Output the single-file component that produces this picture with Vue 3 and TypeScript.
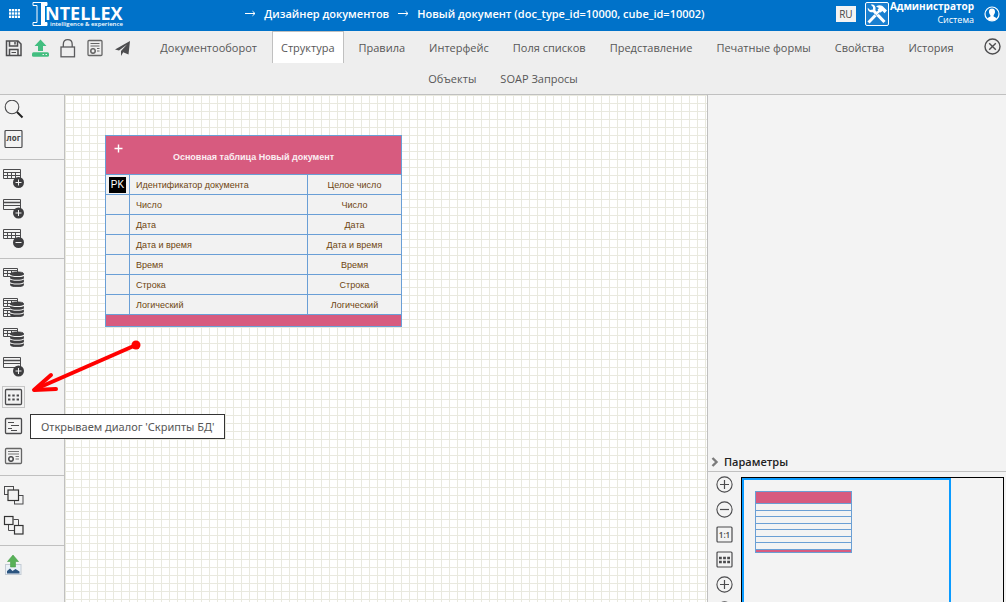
<script setup lang="ts">
import { ref } from 'vue'

interface Field {
  name: string
  type: string
  key?: boolean
}

interface Tool {
  id: string
  label: string
}

const crumbs = ['Дизайнер документов', 'Новый документ (doc_type_id=10000, cube_id=10002)']

const tabs = [
  'Документооборот',
  'Структура',
  'Правила',
  'Интерфейс',
  'Поля списков',
  'Представление',
  'Печатные формы',
  'Свойства',
  'История',
  'Объекты',
  'SOAP Запросы',
]
const activeTab = ref('Структура')

const toolGroups: { name: string; tools: Tool[] }[] = [
  { name: 'view', tools: [{ id: 'search', label: 'Поиск' }, { id: 'log', label: 'Лог' }] },
  {
    name: 'table',
    tools: [
      { id: 'table-plus', label: 'Добавить таблицу' },
      { id: 'rows-plus', label: 'Добавить поле' },
      { id: 'table-minus', label: 'Удалить таблицу' },
    ],
  },
  {
    name: 'database',
    tools: [
      { id: 'db', label: 'Таблица БД' },
      { id: 'db-pair', label: 'Таблицы БД' },
      { id: 'db-sync', label: 'Обновить БД' },
      { id: 'rows-add', label: 'Добавить строку' },
      { id: 'scripts', label: 'Скрипты БД' },
      { id: 'list', label: 'Список' },
      { id: 'report', label: 'Отчёт' },
    ],
  },
  {
    name: 'arrange',
    tools: [{ id: 'front', label: 'На передний план' }, { id: 'back', label: 'На задний план' }],
  },
  { name: 'export', tools: [{ id: 'image', label: 'Выгрузить изображение' }] },
]

const fields: Field[] = [
  { name: 'Идентификатор документа', type: 'Целое число', key: true },
  { name: 'Число', type: 'Число' },
  { name: 'Дата', type: 'Дата' },
  { name: 'Дата и время', type: 'Дата и время' },
  { name: 'Время', type: 'Время' },
  { name: 'Строка', type: 'Строка' },
  { name: 'Логический', type: 'Логический' },
]

const miniLines = [12, 19, 25, 32, 38, 45, 51, 58]
const zoomTools = [
  { id: 'plus', label: 'Увеличить' },
  { id: 'minus', label: 'Уменьшить' },
  { id: 'one', label: 'Масштаб 1:1' },
  { id: 'grid', label: 'Сетка' },
  { id: 'plus', label: 'Расширить' },
  { id: 'minus', label: 'Сузить' },
]
</script>

<template>
  <div class="app">
    <header class="topbar">
      <button class="apps" aria-label="Меню">
        <svg width="11" height="9" viewBox="0 0 11 9" fill="#fff">
          <template v-for="r in 3" :key="r">
            <rect v-for="c in 4" :key="c" :x="(c - 1) * 3" :y="(r - 1) * 3.3" width="2.3" height="2.4" />
          </template>
        </svg>
      </button>
      <a href="#" class="logo" aria-label="Intellex">
        <svg width="94" height="26" viewBox="0 0 94 26">
          <path d="M1 1.500H15V4.500H12.500V21.500H15V24.500H1V21.500H5V4.500H1Z" fill="none" stroke="#fff" />
          <path d="M9 1.500H15V4.500H12.500V21.500H15V24.500H9Z" fill="#fff" />
          <text x="13" y="19" class="logo-name">NTELLEX</text>
          <text x="18" y="25" class="logo-sub">intelligence &amp; experience</text>
        </svg>
      </a>
      <nav class="crumbs">
        <span v-for="c in crumbs" :key="c" class="crumb">
          <svg width="11" height="7" viewBox="0 0 11 7" fill="none" stroke="#fff">
            <path d="M0 3.500H10M7.500 1.200L10 3.500L7.500 5.800" />
          </svg>
          <a href="#">{{ c }}</a>
        </span>
      </nav>
      <div class="account">
        <button class="lang">RU</button>
        <button class="service" aria-label="Настройки">
          <svg width="24" height="24" viewBox="0 0 24 24">
            <rect x="0.500" y="0.500" width="23" height="23" rx="1.500" fill="#1a7fd0" stroke="#fff" />
            <path d="M8 8L19.500 20" stroke="#fff" stroke-width="3.200" />
            <path d="M2.800 5.800L5 8L8 7.500L8 5L5.800 2.800C8.500 2 11 4 10.500 7.500L8.500 10C5.500 11 2.200 9 2.800 5.800Z" fill="#fff" />
            <path d="M3.500 20.500L15 8.500" stroke="#fff" stroke-width="3" />
            <path d="M11 4.500C14 2.300 17 3 19 5.500L22 8.500L19.500 11.200L17.500 9L15.500 10.500L12.500 7.500L14 6Z" fill="#fff" />
            <path d="M12.500 12.500L15 10.500M9.500 12L11.500 14" stroke="#1a7fd0" stroke-width="0.800" />
          </svg>
        </button>
        <div class="who">
          <strong>Администратор</strong>
          <span>Система</span>
        </div>
        <button class="user" aria-label="Профиль">
          <svg width="16" height="16" viewBox="0 0 16 16">
            <circle cx="8" cy="8" r="7" fill="none" stroke="#fff" stroke-width="1.200" />
            <path d="M8 2.500C10.300 2.500 11.200 4.200 11 6.200C10.800 7.800 10 8.500 9.600 9.300V10.500L13 12.200C11.500 14.200 10 14.800 8 14.800C6 14.800 4.500 14.200 3 12.200L6.400 10.500V9.300C6 8.500 5.200 7.800 5 6.200C4.800 4.200 5.700 2.500 8 2.500Z" fill="#fff" />
          </svg>
        </button>
      </div>
    </header>

    <div class="ribbon">
      <div class="actions">
        <button aria-label="Сохранить">
          <svg width="19" height="19" viewBox="0 0 19 19" fill="none" stroke="#4d4d4f" stroke-width="1.500">
            <path d="M2.500 2H14L17 5V16.500H2.500Z" />
            <path d="M5.500 2V7H13.500V2M11 3V5.500" />
            <path d="M5.500 16.500V10.500H14V16.500" />
            <path d="M7.500 13.500H12" stroke-width="1" />
          </svg>
        </button>
        <button aria-label="Загрузить">
          <svg width="19" height="19" viewBox="0 0 19 19" fill="#43be80">
            <path d="M9.500 0.500L15.500 7H12V12H7V7H3.500Z" />
            <rect x="1" y="13.300" width="17" height="4.400" rx="1.500" />
            <path d="M11.500 15.500H13M14.500 15.500H16" stroke="#eee" />
          </svg>
        </button>
        <button aria-label="Заблокировать">
          <svg width="19" height="19" viewBox="-1 0 19 19" fill="none" stroke="#5a5a5c" stroke-width="1.300">
            <rect x="2" y="8" width="13.500" height="9.800" />
            <path d="M4.300 8V5.500C4.300 2 6 0.700 8.700 0.700S13.200 2 13.200 5.500V8" />
          </svg>
        </button>
        <button aria-label="Отчёт">
          <svg width="19" height="19" viewBox="-1 0 19 19" fill="none" stroke="#666">
            <rect x="2" y="1.500" width="14" height="15" rx="1" stroke-width="1.300" />
            <path d="M4.500 4.500H13.500M4.500 7H13.500M11 9.500H13.500M11 12H13.500" />
            <circle cx="7" cy="12" r="2.200" stroke-width="1.500" />
            <path d="M4 12H5M9 12H10M7 9V10M7 14V15" />
          </svg>
        </button>
        <button aria-label="Отправить">
          <svg width="19" height="19" viewBox="-1 0 19 19" fill="#4d4d4f">
            <path d="M17 2L2 10.500L6 11.500L14 5.500L8 12V17L10.200 13.300L15.500 15.500Z" />
          </svg>
        </button>
      </div>
      <button class="close" aria-label="Закрыть">
        <svg width="17" height="17" viewBox="0 0 17 17" fill="none" stroke="#4d4d4f" stroke-width="1.400">
          <circle cx="8.500" cy="8.500" r="7.500" />
          <path d="M5.200 5.200L11.800 11.800M11.800 5.200L5.200 11.800" />
        </svg>
      </button>
      <nav class="tabs">
        <button
          v-for="t in tabs"
          :key="t"
          class="tab"
          :class="{ 'tab--active': t === activeTab }"
          @click="activeTab = t"
        >{{ t }}</button>
      </nav>
    </div>

    <main class="workspace">
      <aside class="toolbox">
        <div v-for="g in toolGroups" :key="g.name" class="group" :class="'group--' + g.name">
          <button
            v-for="t in g.tools"
            :key="t.id"
            class="tool"
            :class="{ 'tool--hover': t.id === 'scripts' }"
            :aria-label="t.label"
          >
            <svg width="21" height="20" viewBox="0 0 21 20" fill="none" stroke="#4b4b4d">
              <template v-if="t.id === 'search'">
                <circle cx="9" cy="7" r="6.800" stroke-width="1.100" />
                <path d="M14 12L19.500 17.500" stroke="#222" stroke-width="2" />
              </template>
              <template v-else-if="t.id === 'log'">
                <rect x="2" y="0.500" width="17" height="17" rx="1" stroke-width="1.200" />
                <text x="10.500" y="11" class="log-text">лог</text>
              </template>
              <template v-else-if="t.id === 'table-plus' || t.id === 'table-minus'">
                <path d="M0.500 0.500H17.500V9.500H0.500ZM0.500 3.500H17.500M0.500 6.500H17.500M4.500 3.500V9.500M8.500 3.500V9.500M12.500 3.500V9.500" />
                <circle cx="15.500" cy="13.500" r="5.500" fill="#3e3e40" stroke="none" />
                <path :d="t.id === 'table-plus' ? 'M12.500 13.500H18.500M15.500 10.500V16.500' : 'M12.500 13.500H18.500'" stroke="#f3f3f3" />
              </template>
              <template v-else-if="t.id === 'rows-plus' || t.id === 'rows-add'">
                <path d="M0.500 0.500H17.500V10.500H0.500ZM0.500 6.500H17.500" />
                <path d="M0.500 3.500H17.500" stroke-width="1.500" />
                <circle cx="15.500" cy="14" r="5.500" fill="#3e3e40" stroke="none" />
                <path d="M12.500 14H18.500M15.500 11V17" stroke="#f3f3f3" />
              </template>
              <template v-else-if="t.id === 'db' || t.id === 'db-sync' || t.id === 'db-pair'">
                <path d="M0.500 1.500H14.500V9.500H0.500ZM0.500 3.500H14.500M0.500 6.500H14.500M4.500 3.500V9.500M8.500 3.500V9.500" />
                <path v-if="t.id === 'db-pair'" d="M0.500 11.500H12V19.500H0.500ZM0.500 13.500H12M0.500 16.500H12M4.500 13.500V19.500" />
                <path
                  d="M7.500 6.500C7.500 4.400 20.500 4.400 20.500 6.500V18C20.500 20.400 7.500 20.400 7.500 18Z"
                  fill="#3e3e40" stroke="#3e3e40" stroke-width="0.800"
                />
                <path
                  d="M7 8.200C9 10 19 10 21 8.200M7 11.900C9 13.700 19 13.700 21 11.900M7 15.600C9 17.400 19 17.400 21 15.600"
                  stroke="#f3f3f3" stroke-width="1.100"
                />
              </template>
              <template v-else-if="t.id === 'scripts'">
                <rect x="2.500" y="2.500" width="16" height="15" rx="1" stroke-width="1.300" />
                <path d="M5 8.500H16M5 12.500H16" stroke-width="2.200" stroke-dasharray="2.400 1.900" />
              </template>
              <template v-else-if="t.id === 'list'">
                <rect x="2.500" y="1.500" width="16" height="15" rx="1" stroke-width="1.300" />
                <path d="M5 5.500H11M8 8.500H16M5 11.500H9M8 13.500H14" stroke-width="1.200" />
              </template>
              <template v-else-if="t.id === 'report'">
                <rect x="2.500" y="1.500" width="16" height="15" rx="1" stroke="#666" stroke-width="1.300" />
                <path d="M5 4.500H16M5 7H16M12.500 9.500H16M12.500 12H16" stroke="#777" />
                <circle cx="8" cy="12" r="2.200" stroke-width="1.500" />
                <path d="M5 12H6M10 12H11M8 9V10M8 14V15" />
              </template>
              <template v-else-if="t.id === 'front'">
                <rect x="1.500" y="1.500" width="9" height="8" />
                <rect x="11.500" y="10.500" width="8.500" height="8.500" />
                <rect x="5" y="5" width="10.500" height="10.500" fill="#f3f3f3" stroke="#333" stroke-width="1.200" />
              </template>
              <template v-else-if="t.id === 'back'">
                <path d="M10.500 4.500H15.500V10.500M5.500 9.500V15.500H11.500" />
                <rect x="1.500" y="1.500" width="8.500" height="8" stroke="#333" stroke-width="1.200" />
                <rect x="11.500" y="10.500" width="8.500" height="8.500" stroke="#333" stroke-width="1.200" />
              </template>
              <template v-else>
                <rect x="2.500" y="9.500" width="15.500" height="10" fill="#eaf1f8" stroke="#c3cbd4" />
                <path d="M4 18.500V16L7 13.500L9.500 16L12.500 14L16.500 16.500V18.500Z" fill="#2c5580" stroke="none" />
                <path d="M10 0L15.500 6.500H12.500V12H7.500V6.500H4.500Z" fill="#58b158" stroke="#4a9f4d" stroke-width="0.600" />
              </template>
            </svg>
          </button>
        </div>
      </aside>

      <section class="canvas">
        <table class="entity">
          <colgroup>
            <col class="col-key" />
            <col />
            <col class="col-type" />
          </colgroup>
          <thead>
            <tr>
              <th colspan="3">
                <button class="add" aria-label="Добавить поле">
                  <svg width="9" height="9" viewBox="0 0 9 9" stroke="#fff" stroke-width="1.400">
                    <path d="M0.500 4.500H8.500M4.500 0.500V8.500" />
                  </svg>
                </button>
                Основная таблица Новый документ
              </th>
            </tr>
          </thead>
          <tbody>
            <tr v-for="f in fields" :key="f.name">
              <td class="cell-key"><span v-if="f.key" class="pk">PK</span></td>
              <td class="cell-name">{{ f.name }}</td>
              <td class="cell-type">{{ f.type }}</td>
            </tr>
          </tbody>
          <tfoot>
            <tr><td colspan="3"></td></tr>
          </tfoot>
        </table>
      </section>

      <aside class="side">
        <div class="properties"></div>
        <button class="params">
          <svg width="8" height="10" viewBox="0 0 8 10" fill="none" stroke="#7b7b7b" stroke-width="2.400">
            <path d="M1.500 1L5.500 5L1.500 9" />
          </svg>
          Параметры
        </button>
        <div class="overview">
          <div class="zoom">
            <button v-for="(z, i) in zoomTools" :key="i" :aria-label="z.label">
              <svg width="17" height="17" viewBox="0 0 17 17" fill="none" stroke="#4b4b4d">
                <template v-if="z.id === 'plus' || z.id === 'minus'">
                  <circle cx="8.500" cy="8.500" r="7.600" stroke-width="1.100" />
                  <path :d="z.id === 'plus' ? 'M4 8.500H13M8.500 4V13' : 'M4 8.500H13'" stroke-width="1.200" />
                </template>
                <template v-else-if="z.id === 'one'">
                  <rect x="1" y="1" width="15" height="15" rx="1" stroke-width="1.200" />
                  <text x="8.500" y="11.500" class="ratio-text">1:1</text>
                </template>
                <template v-else>
                  <rect x="1" y="1" width="15" height="15" rx="1" stroke-width="1.200" />
                  <path d="M3 7H14M3 11H14" stroke-width="2.400" stroke-dasharray="2.800 1.300" />
                </template>
              </svg>
            </button>
          </div>
          <div class="minimap">
            <div class="viewport">
              <svg width="97" height="62" viewBox="0 0 97 62" fill="none" stroke="#6a9fd4">
                <rect x="0.500" y="0.500" width="96" height="61" fill="#f3f3f3" />
                <rect x="0.500" y="0.500" width="96" height="12" fill="#d75b7f" />
                <rect x="0.500" y="58.500" width="96" height="3" fill="#d75b7f" />
                <path v-for="y in miniLines" :key="y" :d="`M0 ${y + 0.5}H97`" />
              </svg>
            </div>
          </div>
        </div>
      </aside>

      <svg class="pointer" width="112" height="56" viewBox="0 0 112 56" fill="none" stroke="#f00">
        <circle cx="106" cy="5" r="4.500" fill="#f00" stroke="none" />
        <path d="M106 5L8 48" stroke-width="4" />
        <path d="M21 35L4 50L26 49" stroke-width="4" stroke-linecap="round" stroke-linejoin="round" />
      </svg>
      <div class="tooltip" role="tooltip">Открываем диалог 'Скрипты БД'</div>
    </main>
  </div>
</template>

<style>
html,
body {
  margin: 0;
  overflow: hidden;
}
</style>

<style scoped>
.app {
  display: flex;
  flex-direction: column;
  height: 100vh;
  overflow: hidden;
  font-family: "Open Sans", "Noto Sans", sans-serif;
  font-size: 11px;
  color: #575757;
  background: #f3f3f3;
}
button {
  margin: 0;
  padding: 0;
  border: 0;
  background: none;
  font: inherit;
  color: inherit;
}
svg {
  display: block;
}
a {
  color: inherit;
  text-decoration: none;
}

.topbar {
  flex: none;
  display: flex;
  height: 31px;
  background: #0072c9;
  color: #fff;
}
.apps {
  align-self: flex-start;
  padding: 9px 10px 9px 9px;
}
.logo {
  padding-top: 1px;
  padding-left: 2px;
}
.logo-name {
  fill: #fff;
  font-family: "Open Sans", sans-serif;
  font-size: 18px;
  font-weight: 700;
}
.logo-sub {
  fill: #fff;
  font-size: 6px;
  font-weight: 600;
}
.crumbs {
  flex: 1;
  display: flex;
  justify-content: center;
  gap: 9px;
  height: 26px;
  padding-right: 12px;
  font-weight: 600;
  white-space: nowrap;
}
.crumb {
  display: flex;
  align-items: center;
  gap: 8px;
}
.account {
  display: flex;
  align-items: flex-start;
  padding-right: 6px;
}
.lang {
  width: 20px;
  height: 16px;
  margin: 6px 9px 0 0;
  background: #f3f3f3;
  color: #444;
  font-size: 10px;
  line-height: 14px;
}
.service {
  margin: 2px 1px 0 0;
}
.who {
  display: flex;
  flex-direction: column;
  align-items: flex-end;
  font-size: 10px;
  line-height: 13px;
}
.who span {
  font-size: 9px;
}
.user {
  margin: 6px 0 0 10px;
}

.ribbon {
  flex: none;
  background: #eee;
  border-bottom: 1px solid #c0c0c0;
}
.actions {
  float: left;
  display: flex;
  height: 31px;
}
.actions button {
  display: flex;
  justify-content: center;
  align-items: center;
  width: 27px;
  padding-top: 3px;
}
.close {
  float: right;
  display: flex;
  justify-content: center;
  align-items: center;
  width: 27px;
  height: 31px;
}
.tabs {
  padding-bottom: 1px;
  text-align: center;
  font-size: 0;
}
.tab {
  height: 32px;
  margin: 0 3px -1px;
  padding: 0 8px;
  border: 1px solid transparent;
  border-bottom: 0;
  vertical-align: top;
  font-size: 11px;
  line-height: 32px;
  white-space: nowrap;
}
.tab--active {
  background: #fff;
  border-color: #c0c0c0;
}

.workspace {
  position: relative;
  flex: 1;
  min-height: 0;
  display: flex;
}
.toolbox {
  flex: none;
  width: 64px;
  border-right: 1px solid #c0c0c0;
}
.group {
  display: flex;
  flex-direction: column;
  padding: 4px 2px;
  border-bottom: 1px solid #c0c0c0;
}
.group--view {
  padding-top: 0;
}
.group--database {
  padding-top: 3px;
  padding-bottom: 3px;
}
.group--arrange {
  padding-bottom: 5px;
}
.group--export {
  border-bottom: 0;
}
.tool {
  width: 23px;
  height: 22px;
  margin: 4px 0;
  border: 1px solid transparent;
}
.tool--hover {
  border-color: #c6c6c6;
}
.log-text {
  fill: #444;
  stroke: none;
  font-size: 8px;
  font-weight: 700;
  text-anchor: middle;
}

.canvas {
  position: relative;
  flex: 1;
  min-width: 0;
  overflow: hidden;
  background-color: #fff;
  background-image:
    linear-gradient(to right, #e9e9df 1px, transparent 1px),
    linear-gradient(to bottom, #e9e9df 1px, transparent 1px);
  background-size: 8px 8px;
}
.entity {
  position: absolute;
  left: 40px;
  top: 40px;
  width: 297px;
  table-layout: fixed;
  border-collapse: collapse;
  background: #f2f2f2;
  color: #6e4510;
  font-family: "Liberation Sans", Arial, sans-serif;
  font-size: 9px;
  line-height: 11px;
}
.entity th,
.entity td {
  box-sizing: border-box;
  height: 20px;
  padding: 0;
  border: 1px solid #6a9fd6;
}
.entity th {
  position: relative;
  height: 39px;
  padding-top: 4px;
  background: #d75b7f;
  color: #fbeef2;
}
.entity tfoot td {
  height: 12px;
  background: #d75b7f;
}
.add {
  position: absolute;
  left: 8px;
  top: 8px;
}
.col-key {
  width: 24px;
}
.col-type {
  width: 94px;
}
.entity .cell-key {
  padding-left: 3px;
}
.entity .cell-name {
  padding-top: 2px;
  padding-left: 6px;
}
.entity .cell-type {
  padding-top: 2px;
  text-align: center;
}
.pk {
  display: block;
  width: 17px;
  height: 16px;
  background: #000;
  color: #fff;
  font-size: 10px;
  line-height: 16px;
  text-align: center;
}

.side {
  flex: none;
  display: flex;
  flex-direction: column;
  width: 298px;
  border-left: 1px solid #c0c0c0;
}
.properties {
  flex: 1;
}
.params {
  display: flex;
  align-items: center;
  gap: 5px;
  height: 20px;
  padding-left: 3px;
  border-bottom: 1px solid #c0c0c0;
  color: #222;
  font-weight: 600;
}
.overview {
  flex: none;
  display: flex;
  height: 130px;
  overflow: hidden;
}
.zoom {
  flex: none;
  display: flex;
  flex-direction: column;
  width: 33px;
}
.zoom button {
  flex: none;
  display: flex;
  justify-content: center;
  align-items: center;
  height: 25px;
}
.ratio-text {
  fill: #444;
  stroke: none;
  font-size: 8px;
  font-weight: 600;
  text-anchor: middle;
}
.minimap {
  flex: 1;
  margin: 5px 2px 0 0;
  border: 1px solid #000;
  border-bottom: 0;
}
.viewport {
  box-sizing: border-box;
  width: 80%;
  height: 100%;
  padding: 11px;
  border: 2px solid #0a9bff;
  border-bottom: 0;
}

.pointer {
  position: absolute;
  left: 30px;
  top: 245px;
}
.tooltip {
  position: absolute;
  left: 30px;
  top: 319px;
  padding: 0 10px;
  border: 1px solid #333;
  background: #fff;
  font-family: "Noto Sans", sans-serif;
  line-height: 23px;
  white-space: nowrap;
}
</style>
